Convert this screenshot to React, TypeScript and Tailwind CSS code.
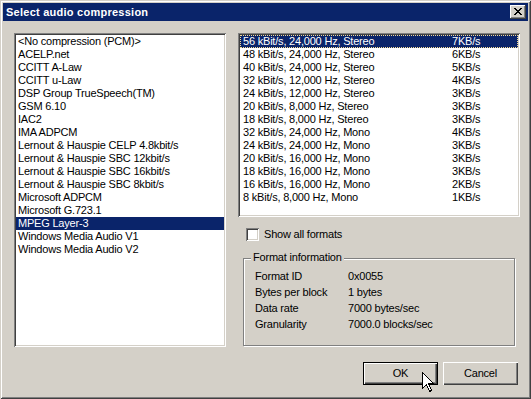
import React from "react";

const leftItems = [
  "<No compression (PCM)>",
  "ACELP.net",
  "CCITT A-Law",
  "CCITT u-Law",
  "DSP Group TrueSpeech(TM)",
  "GSM 6.10",
  "IAC2",
  "IMA ADPCM",
  "Lernout & Hauspie CELP 4.8kbit/s",
  "Lernout & Hauspie SBC 12kbit/s",
  "Lernout & Hauspie SBC 16kbit/s",
  "Lernout & Hauspie SBC 8kbit/s",
  "Microsoft ADPCM",
  "Microsoft G.723.1",
  "MPEG Layer-3",
  "Windows Media Audio V1",
  "Windows Media Audio V2",
];

const rightItems: [string, string][] = [
  ["56 kBit/s, 24,000 Hz, Stereo", "7KB/s"],
  ["48 kBit/s, 24,000 Hz, Stereo", "6KB/s"],
  ["40 kBit/s, 24,000 Hz, Stereo", "5KB/s"],
  ["32 kBit/s, 12,000 Hz, Stereo", "4KB/s"],
  ["24 kBit/s, 12,000 Hz, Stereo", "3KB/s"],
  ["20 kBit/s, 8,000 Hz, Stereo", "3KB/s"],
  ["18 kBit/s, 8,000 Hz, Stereo", "3KB/s"],
  ["32 kBit/s, 24,000 Hz, Mono", "4KB/s"],
  ["24 kBit/s, 24,000 Hz, Mono", "3KB/s"],
  ["20 kBit/s, 16,000 Hz, Mono", "3KB/s"],
  ["18 kBit/s, 16,000 Hz, Mono", "3KB/s"],
  ["16 kBit/s, 16,000 Hz, Mono", "2KB/s"],
  ["8 kBit/s, 8,000 Hz, Mono", "1KB/s"],
];

const info: [string, string][] = [
  ["Format ID", "0x0055"],
  ["Bytes per block", "1 bytes"],
  ["Data rate", "7000 bytes/sec"],
  ["Granularity", "7000.0 blocks/sec"],
];

const sunken =
  "shadow-[inset_1px_1px_#808080,inset_-1px_-1px_#ffffff,inset_2px_2px_#404040,inset_-2px_-2px_#d4d0c8]";

export default function App() {
  return (
    <div
      className="relative w-[531px] h-[399px] bg-[#d4d0c8] p-[3px] text-black text-[11px] tracking-[-0.2px] overflow-hidden shadow-[inset_1px_1px_#d4d0c8,inset_-1px_-1px_#404040,inset_2px_2px_#ffffff,inset_-2px_-2px_#808080]"
      style={{ fontFamily: '"Liberation Sans", Arial, sans-serif' }}
    >
      {/* Title bar */}
      <div className="h-[18px] bg-[#0a246a] flex items-center pl-[3px] pr-[2px]">
        <span className="text-white font-bold text-[11px] tracking-[0.25px] leading-[18px] flex-1">
          Select audio compression
        </span>
        <div className="w-[16px] h-[14px] bg-[#d4d0c8] flex items-center justify-center shadow-[inset_-1px_-1px_#404040,inset_1px_1px_#ffffff,inset_-2px_-2px_#808080]">
          <svg width="8" height="7" viewBox="0 0 8 7" className="block mb-[1px]">
            <path
              d="M0 0h2v1h1v1h2V1h1V0h2v1H7v1H6v1H5v1h1v1h1v1h1v1H6V6H5V5H3v1H2v1H0V6h1V5h1V4h1V3H2V2H1V1H0z"
              fill="#000"
            />
          </svg>
        </div>
      </div>

      {/* Body */}
      <div className="flex flex-col pt-[12px] pl-[11px] pr-[8px]">
        <div className="flex gap-[12px]">
          {/* Left listbox */}
          <div className={`w-[212px] h-[314px] bg-white p-[2px] ${sunken}`}>
            {leftItems.map((t) => {
              const sel = t === "MPEG Layer-3";
              return (
                <div
                  key={t}
                  className={`h-[13px] leading-[13px] pl-[2px] whitespace-nowrap ${
                    sel ? "bg-[#0a246a] text-white" : ""
                  }`}
                >
                  {t}
                </div>
              );
            })}
          </div>

          {/* Right column */}
          <div className="w-[282px] flex flex-col">
            <div className={`h-[184px] bg-white p-[2px] ${sunken}`}>
              {rightItems.map(([a, b], i) => (
                <div
                  key={a}
                  className={`h-[13px] leading-[11px] flex whitespace-nowrap border border-dotted ${
                    i === 0
                      ? "bg-[#0a246a] text-white border-[#f5db95]"
                      : "border-transparent"
                  }`}
                >
                  <span className="w-[211px] pl-[2px]">{a}</span>
                  <span>{b}</span>
                </div>
              ))}
            </div>

            <div className="mt-[11px] ml-[8px] flex items-center h-[13px]">
              <div className="w-[13px] h-[13px] bg-white shadow-[inset_1px_1px_#808080,inset_-1px_-1px_#ffffff,inset_2px_2px_#404040,inset_-2px_-2px_#d4d0c8]" />
              <span className="ml-[5px] leading-[13px]">Show all formats</span>
            </div>

            <div className="relative mt-[17px] ml-[5px] w-[272px] h-[88px] border border-[#808080] shadow-[inset_1px_1px_#ffffff,1px_1px_#ffffff]">
              <span className="absolute left-[7px] top-[-8px] px-[2px] bg-[#d4d0c8] leading-[13px] whitespace-nowrap">
                Format information
              </span>
              <div className="pt-[9px] pl-[11px]">
                {info.map(([k, v]) => (
                  <div key={k} className="flex h-[16px] leading-[16px] whitespace-nowrap">
                    <span className="w-[93px]">{k}</span>
                    <span>{v}</span>
                  </div>
                ))}
              </div>
            </div>
          </div>
        </div>

        {/* Buttons */}
        <div className="mt-[15px] mr-[2px] flex justify-end gap-[5px]">
          <div className="w-[75px] h-[23px] border border-black">
            <div className="w-full h-full flex items-center justify-center shadow-[inset_1px_1px_#ffffff,inset_-1px_-1px_#404040,inset_-2px_-2px_#808080]">
              OK
            </div>
          </div>
          <div className="w-[75px] h-[23px] flex items-center justify-center shadow-[inset_1px_1px_#ffffff,inset_-1px_-1px_#404040,inset_-2px_-2px_#808080]">
            Cancel
          </div>
        </div>
      </div>

      {/* Mouse cursor */}
      <svg
        width="13"
        height="21"
        viewBox="0 0 13 21"
        className="absolute left-[422px] top-[372px]"
      >
        <path
          d="M0.5 0.5 L0.5 16.5 L4.5 12.5 L7.5 19.5 L9.5 18.5 L6.5 11.5 L11.5 11.5 Z"
          fill="#fff"
          stroke="#000"
          strokeWidth="1"
          shapeRendering="crispEdges"
        />
      </svg>
    </div>
  );
}
